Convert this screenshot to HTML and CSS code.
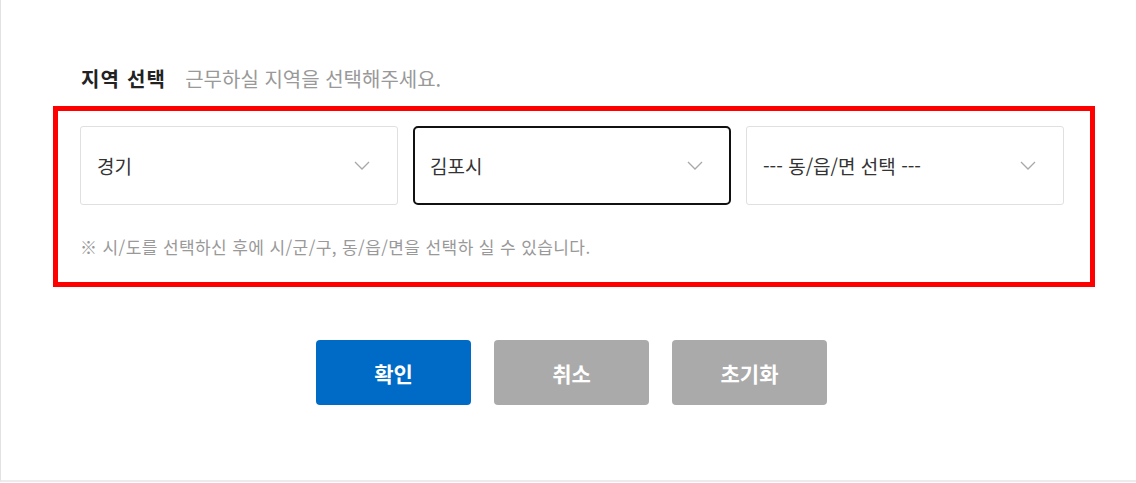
FILE: index.html
```html
<!DOCTYPE html>
<html lang="ko">
<head>
  <meta charset="UTF-8">
  <meta name="viewport" content="width=device-width, initial-scale=1.0">
  <title>지역 선택</title>
  <link rel="stylesheet" href="styles.css">
</head>
<body>
  <div id="region-modal">
    <div class="modal-title">
      <h2>지역 선택</h2>
      <span class="sub">근무하실 지역을 선택해주세요.</span>
    </div>

    <div class="region-box">
      <div class="selects">
        <div class="select-box">
          <span>경기</span>
          <svg class="arrow" width="16" height="9" viewBox="0 0 16 9"><path d="M1 1l7 7 7-7" fill="none" stroke="#a8a8a8" stroke-width="1.3"/></svg>
        </div>
        <div class="select-box active">
          <span>김포시</span>
          <svg class="arrow" width="16" height="9" viewBox="0 0 16 9"><path d="M1 1l7 7 7-7" fill="none" stroke="#a8a8a8" stroke-width="1.3"/></svg>
        </div>
        <div class="select-box">
          <span>--- 동/읍/면 선택 ---</span>
          <svg class="arrow" width="16" height="9" viewBox="0 0 16 9"><path d="M1 1l7 7 7-7" fill="none" stroke="#a8a8a8" stroke-width="1.3"/></svg>
        </div>
      </div>
      <p class="note">※ 시/도를 선택하신 후에 시/군/구, 동/읍/면을 선택하 실 수 있습니다.</p>
    </div>

    <div class="buttons">
      <button class="btn btn-ok">확인</button>
      <button class="btn btn-gray">취소</button>
      <button class="btn btn-gray">초기화</button>
    </div>
  </div>
</body>
</html>
```

FILE: styles.css
```css
body {
  margin: 0;
  padding: 0;
  font-family: "Noto Sans CJK KR", "Noto Sans", sans-serif;
  background: #ffffff;
  color: #333;
}

#region-modal {
  box-sizing: border-box;
  height: 482px;
  padding-top: 63px;
  border-left: 1px solid #e2e2e2;
  border-bottom: 2px solid #ececec;
}

.modal-title {
  display: flex;
  align-items: center;
  gap: 19px;
  height: 30px;
  padding-left: 80px;
}

.modal-title h2 {
  margin: 0;
  font-size: 20px;
  font-weight: bold;
  letter-spacing: 1.2px;
  color: #222;
}

.modal-title .sub {
  font-size: 20px;
  color: #999;
}

.region-box {
  box-sizing: border-box;
  width: 1042px;
  height: 181px;
  margin: 13px 0 0 52px;
  padding: 15px 0 0 22px;
  border: 5px solid #ff0000;
}

.selects {
  display: grid;
  grid-template-columns: repeat(3, 318px);
  gap: 15px;
}

.select-box {
  box-sizing: border-box;
  height: 79px;
  display: flex;
  align-items: center;
  justify-content: space-between;
  padding: 0 27px 0 16px;
  border: 1px solid #e0e0e0;
  border-radius: 3px;
  font-size: 19px;
  color: #333;
}

.select-box.active {
  border: 2px solid #111;
  border-radius: 5px;
  padding: 0 26px 0 15px;
}

.note {
  margin: 30px 0 0;
  line-height: 24px;
  font-size: 17px;
  letter-spacing: 0.4px;
  color: #999;
}

.buttons {
  display: flex;
  justify-content: center;
  gap: 23px;
  margin-top: 53px;
  padding-left: 6px;
}

.btn {
  width: 155px;
  height: 65px;
  border: none;
  border-radius: 4px;
  color: #fff;
  font-family: "Noto Sans CJK KR", "Noto Sans", sans-serif;
  font-size: 21px;
  font-weight: bold;
  cursor: pointer;
}

.btn-ok {
  background: #006bc6;
}

.btn-gray {
  background: #aaaaaa;
}
```
